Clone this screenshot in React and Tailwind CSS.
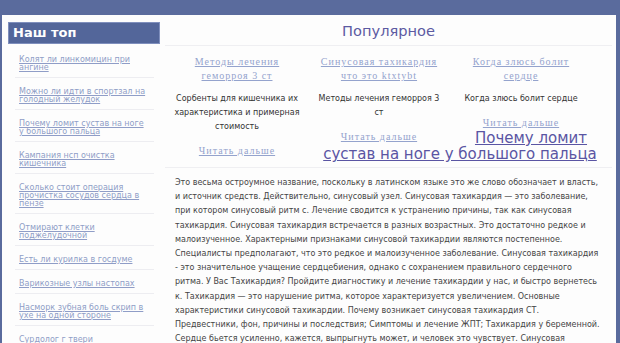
import React from "react";

const side = [
  "Колят ли линкомицин при ангине",
  "Можно ли идти в спортзал на голодный желудок",
  "Почему ломит сустав на ноге у большого пальца",
  "Кампания нсп очистка кишечника",
  "Сколько стоит операция прочистка сосудов сердца в пензе",
  "Отмирают клетки поджелудочной",
  "Есть ли курилка в госдуме",
  "Варикозные узлы настопах",
  "Насморк зубная боль скрип в ухе на одной стороне",
  "Сурдолог г твери",
];

const cols = [
  {
    t: "Методы лечения геморроя 3 ст",
    d: "Сорбенты для кишечника их характеристика и примерная стоимость",
  },
  {
    t: "Синусовая тахикардия что это ktxtybt",
    d: "Методы лечения геморроя 3 ст",
  },
  {
    t: "Когда злюсь болит сердце",
    d: "Когда злюсь болит сердце",
  },
];

const body = [
  "Это весьма остроумное название, поскольку в латинском языке это же слово обозначает и власть,",
  "и источник средств. Действительно, синусовый узел. Синусовая тахикардия — это заболевание,",
  "при котором синусовый ритм с. Лечение сводится к устранению причины, так как синусовая",
  "тахикардия. Синусовая тахикардия встречается в разных возрастных. Это достаточно редкое и",
  "малоизученное. Характерными признаками синусовой тахикардии являются постепенное.",
  "Специалисты предполагают, что это редкое и малоизученное заболевание. Синусовая тахикардия",
  "- это значительное учащение сердцебиения, однако с сохранением правильного сердечного",
  "ритма. У Вас Тахикардия? Пройдите диагностику и лечение тахикардии у нас, и быстро вернетесь",
  "к. Тахикардия — это нарушение ритма, которое характеризуется увеличением. Основные",
  "характеристики синусовой тахикардии. Почему возникает синусовая тахикардия СТ.",
  "Предвестники, фон, причины и последствия; Симптомы и лечение ЖПТ; Тахикардия у беременной.",
  "Сердце бьется усиленно, кажется, выпрыгнуть может, и человек это чувствует. Синусовая",
];

export default function App() {
  return (
    <div className="w-[620px] h-[343px] overflow-hidden bg-[#5a6b9d] pt-[15px] pl-[2px] pr-[4px] font-['DejaVu_Sans',sans-serif]">
      <div className="flex h-[400px] bg-[#fdfdfd]">
        <aside className="w-[163px] shrink-0 pl-[6px] pt-[7px]">
          <div className="flex h-[22px] w-[152px] items-center border border-[#7f8fbd] bg-[#53669a] pl-[4px] text-[13px] font-bold text-white">
            Наш топ
          </div>
          <ul className="ml-[7px] mt-[2px] w-[139px]">
            {side.map((s) => (
              <li
                key={s}
                className="border-b border-[#ededf1] pb-[5px] pl-[4px] pr-[5px] pt-[10px] text-[8px] leading-[8px]"
              >
                <a className="text-[#8f9dc7] underline">{s}</a>
              </li>
            ))}
          </ul>
        </aside>
        <main className="min-w-0 flex-1 overflow-hidden pr-[4px]">
          <div className="h-[31px] border-b border-[#efeff2] pt-[7px] text-center text-[14.6px] leading-[18px] text-[#5c5aa2]">
            Популярное
          </div>
          <div className="flow-root border-b border-[#efeff2] pb-[5px] pl-[1px] pt-[9px] text-center leading-[16px]">
            {cols.map((c, i) => (
              <div key={i} className="float-left w-[142px] px-[6px] leading-[14px]">
                <div className="font-['Liberation_Serif',serif] text-[10px] leading-[14px] tracking-[1px]">
                  <a className="text-[#94a3cd] underline">{c.t}</a>
                </div>
                <div className="mt-[9px] text-[8px] leading-[14px] text-[#333]">{c.d}</div>
                <div className="mt-[10px] font-['Liberation_Serif',serif] text-[10px] leading-[14px] tracking-[1px]">
                  <a className="text-[#94a3cd] underline">Читать дальше</a>
                </div>
              </div>
            ))}
            <a className="text-[15px] leading-[16px] text-[#5a55a3] underline">
              Почему ломит сустав на ноге у большого пальца
            </a>
          </div>
          <div className="pl-[10px] pt-[8px] text-[8px] leading-[14.2px] text-[#444] whitespace-nowrap">
            {body.map((l, i) => (
              <React.Fragment key={i}>
                {l}
                <br />
              </React.Fragment>
            ))}
          </div>
        </main>
      </div>
    </div>
  );
}
